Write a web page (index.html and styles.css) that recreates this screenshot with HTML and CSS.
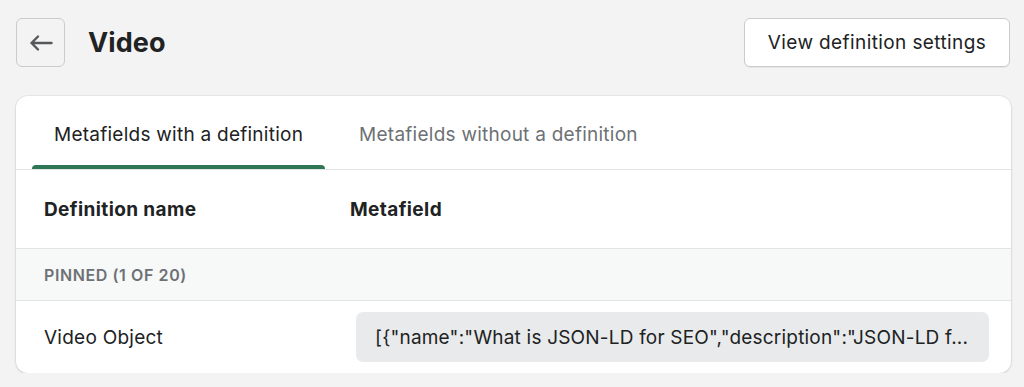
FILE: index.html
```html
<!DOCTYPE html>
<html lang="en">
<head>
<meta charset="utf-8">
<title>Video</title>
<link rel="stylesheet" href="styles.css">
</head>
<body>
<div class="page">
  <header class="topbar">
    <button class="back-btn" aria-label="Back">
      <svg width="24" height="24" viewBox="0 0 24 24" fill="none">
        <path d="M22.5 12H2.5M9 5.5L2.5 12L9 18.5" stroke="#55585b" stroke-width="2.4" stroke-linecap="round" stroke-linejoin="round"/>
      </svg>
    </button>
    <h1 class="title">Video</h1>
    <button class="settings-btn">View definition settings</button>
  </header>

  <section class="card">
    <nav class="tabs">
      <div class="tab tab-active">Metafields with a definition</div>
      <div class="tab">Metafields without a definition</div>
    </nav>
    <div class="row head-row">
      <div class="col-name">Definition name</div>
      <div class="col-field">Metafield</div>
    </div>
    <div class="row pinned-row">PINNED (1 OF 20)</div>
    <div class="row data-row">
      <div class="col-name">Video Object</div>
      <div class="code-box">[{"name":"What is JSON-LD for SEO","description":"JSON-LD f...</div>
    </div>
  </section>
</div>
</body>
</html>
```

FILE: styles.css
```css
* { box-sizing: border-box; }
html, body { margin: 0; padding: 0; }
body {
  background: #f3f3f3;
  font-family: Inter, "Noto Sans", "Liberation Sans", sans-serif;
  color: #202223;
}
.page {
  padding: 18px 13px 0 16px;
}
.topbar {
  display: flex;
  align-items: center;
  height: 49px;
}
.back-btn {
  width: 49px;
  height: 49px;
  border: 1px solid #c9cccf;
  border-radius: 6px;
  background: transparent;
  display: flex;
  align-items: center;
  justify-content: center;
  padding: 0;
}
.title {
  margin: 0 0 0 23px;
  font-size: 27px;
  font-weight: 700;
  letter-spacing: 0.1px;
  color: #202223;
  flex: 1;
}
.settings-btn {
  height: 49px;
  width: 266px;
  margin-right: 1px;
  background: #fff;
  border: 1px solid #c9cccf;
  border-radius: 6px;
  box-shadow: 0 1px 0 rgba(0,0,0,0.05);
  font-family: inherit;
  font-size: 19px;
  letter-spacing: 0.4px;
  color: #202223;
  padding: 0;
}
.card {
  margin-top: 29px;
  background: #fff;
  border-radius: 12px;
  box-shadow: 0 0 0 1px rgba(0,0,0,0.04), 0 1px 3px rgba(0,0,0,0.12);
  overflow: hidden;
}
.tabs {
  display: flex;
  gap: 12px;
  padding-left: 16px;
  height: 74px;
  border-bottom: 1px solid #e1e3e5;
}
.tab {
  padding: 3px 22px 0;
  display: flex;
  align-items: center;
  font-size: 19px;
  letter-spacing: 0.25px;
  color: #6d7175;
  position: relative;
}
.tab-active {
  color: #202223;
}
.tab-active::after {
  content: "";
  position: absolute;
  left: 0;
  right: 0;
  bottom: 0;
  height: 4px;
  background: #2f7654;
  border-radius: 4px 4px 0 0;
}
.row {
  display: flex;
  align-items: center;
  padding: 0 22px 0 28px;
  border-bottom: 1px solid #e1e3e5;
}
.head-row {
  height: 79px;
  font-size: 19px;
  font-weight: 700;
  letter-spacing: 0.4px;
}
.col-name {
  width: 306px;
  flex: none;
}
.pinned-row {
  height: 52px;
  background: #f7f8f8;
  font-size: 16px;
  font-weight: 600;
  color: #6d7175;
  letter-spacing: 0.6px;
}
.data-row {
  height: 72px;
  border-bottom: none;
  font-size: 19px;
  letter-spacing: 0.25px;
}
.code-box {
  flex: 1;
  margin-left: 6px;
  height: 50px;
  background: #e9eaeb;
  border-radius: 7px;
  display: flex;
  align-items: center;
  padding-left: 19px;
  font-size: 19px;
  letter-spacing: 0.2px;
  color: #202223;
  white-space: nowrap;
  overflow: hidden;
}
```
